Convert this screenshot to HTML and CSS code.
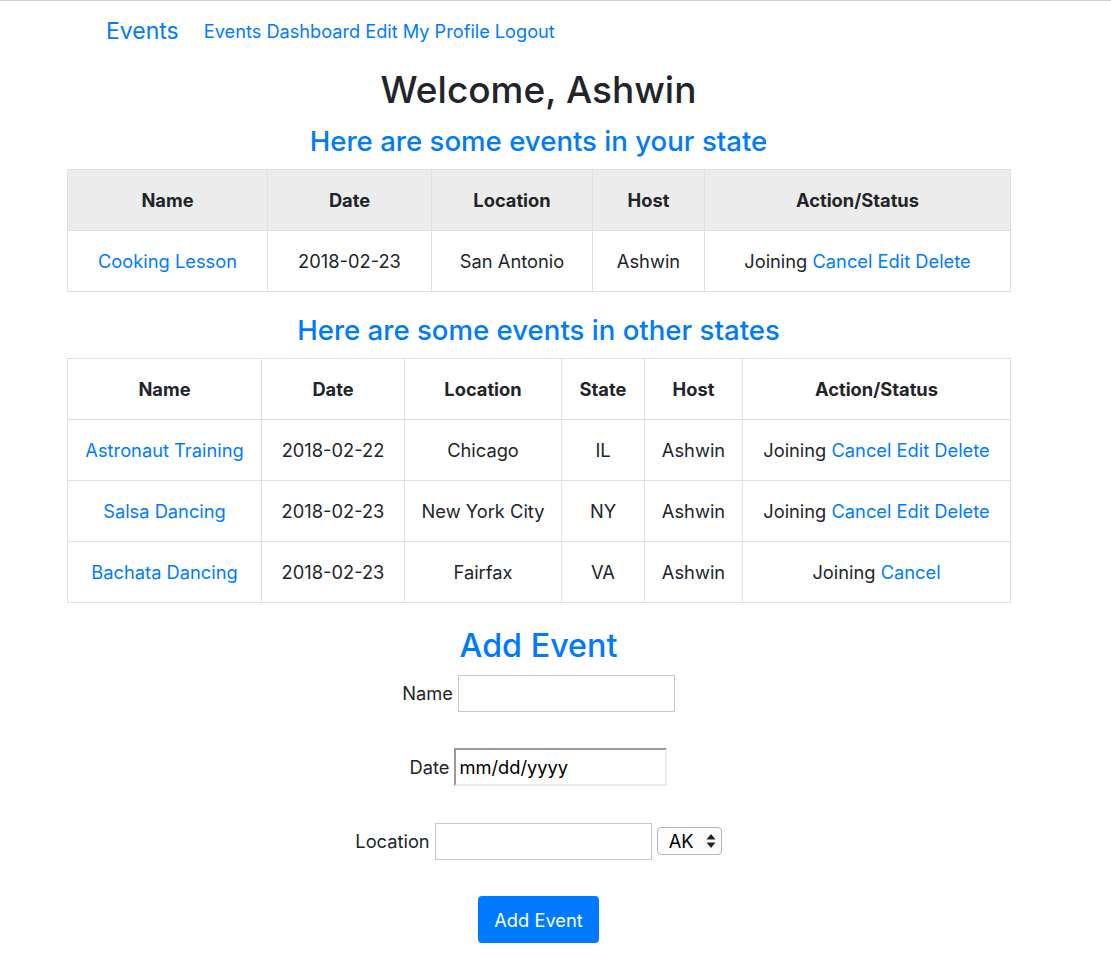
FILE: index.html
```html
<!DOCTYPE html>
<html lang="en">
<head>
<meta charset="utf-8">
<title>Events</title>
<link rel="stylesheet" href="styles.css">
</head>
<body>
<nav class="navbar">
  <a class="brand" href="#">Events</a>
  <div class="nav-links">
    <a href="#">Events Dashboard</a>
    <a href="#">Edit My Profile</a>
    <a href="#">Logout</a>
  </div>
</nav>
<main class="page">
  <h1 class="welcome">Welcome, Ashwin</h1>
  <h3 class="section-title">Here are some events in your state</h3>
  <table class="events t1">
    <colgroup>
      <col class="c1-name"><col class="c1-date"><col class="c1-loc"><col class="c1-host"><col class="c1-act">
    </colgroup>
    <thead>
      <tr class="head-gray"><th>Name</th><th>Date</th><th>Location</th><th>Host</th><th>Action/Status</th></tr>
    </thead>
    <tbody>
      <tr><td><a href="#">Cooking Lesson</a></td><td>2018-02-23</td><td>San Antonio</td><td>Ashwin</td><td>Joining <a href="#">Cancel</a> <a href="#">Edit</a> <a href="#">Delete</a></td></tr>
    </tbody>
  </table>
  <h3 class="section-title">Here are some events in other states</h3>
  <table class="events t2">
    <colgroup>
      <col class="c2-name"><col class="c2-date"><col class="c2-loc"><col class="c2-state"><col class="c2-host"><col class="c2-act">
    </colgroup>
    <thead>
      <tr><th>Name</th><th>Date</th><th>Location</th><th>State</th><th>Host</th><th>Action/Status</th></tr>
    </thead>
    <tbody>
      <tr><td><a href="#">Astronaut Training</a></td><td>2018-02-22</td><td>Chicago</td><td>IL</td><td>Ashwin</td><td>Joining <a href="#">Cancel</a> <a href="#">Edit</a> <a href="#">Delete</a></td></tr>
      <tr><td><a href="#">Salsa Dancing</a></td><td>2018-02-23</td><td>New York City</td><td>NY</td><td>Ashwin</td><td>Joining <a href="#">Cancel</a> <a href="#">Edit</a> <a href="#">Delete</a></td></tr>
      <tr><td><a href="#">Bachata Dancing</a></td><td>2018-02-23</td><td>Fairfax</td><td>VA</td><td>Ashwin</td><td>Joining <a href="#">Cancel</a></td></tr>
    </tbody>
  </table>
  <h2 class="add-title">Add Event</h2>
  <form class="add-form">
    <div class="form-row"><label for="n">Name</label> <input id="n" class="field" type="text"></div>
    <div class="form-row"><label for="d">Date</label> <input id="d" class="field date" type="text" placeholder="mm/dd/yyyy"></div>
    <div class="form-row"><label for="l">Location</label> <input id="l" class="field" type="text">
      <span class="select-wrap"><select class="state-select"><option>AK</option></select><svg class="select-arrows" width="10" height="16" viewBox="0 0 10 16"><path d="M5 1 L9.5 6.5 H0.5 Z M5 15 L9.5 9.5 H0.5 Z" fill="#222"/></svg></span>
    </div>
    <div class="form-row btn-row"><button type="button" class="btn">Add Event</button></div>
  </form>
</main>
</body>
</html>
```
FILE: styles.css
```css
html, body {
  margin: 0;
  padding: 0;
  background: #fff;
}
body {
  font-family: Inter, "Noto Sans", "Liberation Sans", sans-serif;
  color: #212529;
  font-size: 18.3px;
  border-top: 1px solid #d0d0d0;
}
a {
  color: #007bff;
  text-decoration: none;
}
.navbar {
  display: flex;
  align-items: center;
  height: 60px;
  padding-left: 106px;
}
.brand {
  font-size: 23px;
  margin-right: 25px;
}
.nav-links {
  display: flex;
  gap: 5px;
  font-size: 18.2px;
}
.page {
  width: 943px;
  margin-left: 67px;
  text-align: center;
}
.welcome {
  font-size: 37px;
  font-weight: 500;
  line-height: 46px;
  margin: 6px 0 0;
}
.section-title {
  font-size: 27.6px;
  font-weight: 500;
  color: #007bff;
  line-height: 36px;
  margin: 10px 0 10px;
}
.events {
  width: 943px;
  border-collapse: collapse;
  table-layout: fixed;
  margin-bottom: 20px;
}
.events th, .events td {
  border: 1px solid #dee2e6;
  height: 60px;
  padding: 0 8px;
  text-align: center;
  vertical-align: middle;
}
.events th {
  font-weight: 700;
}
.head-gray th {
  background: #ececec;
}
.c1-name { width: 200px; }
.c1-date { width: 164px; }
.c1-loc { width: 161px; }
.c1-host { width: 112px; }
.c1-act { width: 306px; }
.c2-name { width: 194px; }
.c2-date { width: 143px; }
.c2-loc { width: 157px; }
.c2-state { width: 83px; }
.c2-host { width: 98px; }
.c2-act { width: 268px; }
.add-title {
  font-size: 32.3px;
  font-weight: 500;
  color: #007bff;
  line-height: 42px;
  margin: 22px 0 7px;
}
.add-form {
  display: flex;
  flex-direction: column;
  align-items: center;
}
.form-row {
  display: flex;
  align-items: center;
  justify-content: center;
  gap: 5px;
  height: 38px;
  margin-bottom: 36px;
}
.field {
  width: 217px;
  height: 37px;
  box-sizing: border-box;
  border: 1px solid #c8c8c8;
  font: inherit;
  padding: 0 3px;
  margin: 0;
  background: #fff;
}
.field.date {
  width: 213px;
  height: 38px;
  border: 2px solid;
  border-color: #9a9a9a #ececec #ececec #9a9a9a;
}
.field.date::placeholder {
  color: #000;
  opacity: 1;
}
.select-wrap {
  position: relative;
  display: inline-block;
}
.state-select {
  appearance: none;
  -webkit-appearance: none;
  width: 65px;
  height: 28px;
  box-sizing: border-box;
  border: 1px solid #b5b5b5;
  border-radius: 4px;
  background: #fbfbfb;
  font: inherit;
  color: #000;
  padding: 0 0 0 11px;
}
.select-arrows {
  position: absolute;
  right: 6px;
  top: 6px;
  pointer-events: none;
}
.btn-row {
  height: 47px;
}
.btn {
  background: #007bff;
  color: #fff;
  border: 0;
  border-radius: 4px;
  width: 121px;
  height: 47px;
  font: inherit;
  font-size: 18.3px;
}
```
